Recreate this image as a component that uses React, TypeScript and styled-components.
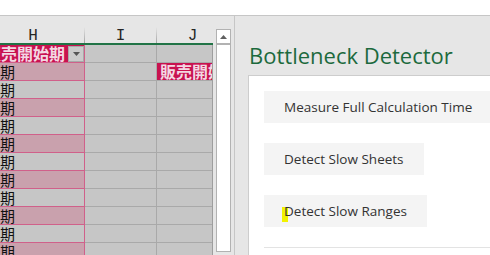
import React from 'react';
import styled, { createGlobalStyle } from 'styled-components';

const GlobalStyle = createGlobalStyle`
  html, body { margin: 0; padding: 0; background: #ffffff; }
  body { font-family: "Open Sans", "Noto Sans", sans-serif; }
  #root { width: 490px; height: 255px; overflow: hidden; }
`;

const Window = styled.div`
  width: 490px;
  height: 255px;
  display: flex;
  flex-direction: column;
  overflow: hidden;
  background: #e6e6e6;
`;

const FormulaBar = styled.div`
  flex: none;
  height: 15px;
  background: #ffffff;
  border-bottom: 1px solid #c6c6c6;
`;

const Workspace = styled.div`
  flex: 1;
  min-height: 0;
  display: flex;
`;

const Sheet = styled.div`
  flex: none;
  width: 234px;
  display: flex;
`;

const GridViewport = styled.div`
  flex: none;
  width: 213px;
  padding-top: 11px;
  box-sizing: border-box;
  display: flex;
  flex-direction: column;
  overflow: hidden;
`;

const ColumnHeaderRow = styled.div`
  flex: none;
  display: flex;
  height: 18px;
  margin-left: -18px;
  box-sizing: border-box;
  border-bottom: 2px solid #217346;
`;

const ColumnHeader = styled.div<{ $w: number }>`
  flex: none;
  width: ${(p) => p.$w}px;
  height: 16px;
  box-sizing: border-box;
  padding-top: 1px;
  text-align: center;
  font-family: "Liberation Mono", monospace;
  font-size: 16px;
  line-height: 16px;
  color: #262626;
  border-right: 1px solid transparent;
  border-image: linear-gradient(to bottom, #e6e6e6, #a4a4a4) 1;
  border-image-slice: 0 1 0 0;
`;

const BodyFrame = styled.div`
  flex: 1;
  min-height: 0;
  overflow: hidden;
  border-right: 1px solid #9e9e9e;
`;

const Rows = styled.div`
  margin-left: -18px;
  display: flex;
  flex-direction: column;
`;

const Row = styled.div`
  display: flex;
  height: 18px;
`;

type Tone = 'head' | 'pink' | 'gray';

const toneBg: Record<Tone, string> = {
  head: '#c8124f',
  pink: '#c9a1ad',
  gray: '#c6c6c6',
};

const Cell = styled.div<{ $w: number; $tone: Tone; $line: 'pink' | 'gray' }>`
  position: relative;
  flex: none;
  width: ${(p) => p.$w}px;
  height: 18px;
  box-sizing: border-box;
  padding-left: 3px;
  display: flex;
  align-items: flex-end;
  overflow: hidden;
  white-space: nowrap;
  background: ${(p) => toneBg[p.$tone]};
  border-right: 1px solid ${(p) => (p.$line === 'pink' ? '#d0608a' : '#a9a9a9')};
  border-bottom: 1px solid ${(p) => (p.$line === 'pink' ? '#d0608a' : '#a9a9a9')};
  font-family: "Noto Sans CJK JP", sans-serif;
  font-size: ${(p) => (p.$tone === 'head' ? 16 : 15)}px;
  font-weight: ${(p) => (p.$tone === 'head' ? 700 : 400)};
  line-height: 17px;
  color: ${(p) => (p.$tone === 'head' ? '#f3d8e2' : '#111111')};
`;

const FilterButton = styled.div`
  position: absolute;
  right: 0;
  top: 1px;
  width: 16px;
  height: 16px;
  box-sizing: border-box;
  background: #cbcbcb;
  border: 1px solid #a8a8a8;
  display: flex;
  align-items: center;
  justify-content: center;
`;

const Gutter = styled.div`
  flex: 1;
  display: flex;
  padding: 13px 3px 3px 3px;
`;

const ScrollBar = styled.div`
  width: 15px;
  flex: none;
  box-sizing: border-box;
  border: 1px solid #b2b2b2;
  background: #ffffff;
  display: flex;
  flex-direction: column;
`;

const ScrollArrow = styled.div`
  height: 13px;
  flex: none;
  border-bottom: 2px solid #b2b2b2;
  display: flex;
  align-items: center;
  justify-content: center;
`;

const Pane = styled.div`
  flex: 1;
  min-width: 0;
  display: flex;
  flex-direction: column;
  border-left: 1px solid #c6c6c6;
  padding-left: 13px;
  overflow: hidden;
`;

const Title = styled.h1`
  margin: 24px 0 5px 1px;
  font-family: "Open Sans", sans-serif;
  font-size: 22px;
  font-weight: 400;
  line-height: 30px;
  color: #1c6a3d;
  white-space: nowrap;
`;

const Content = styled.div`
  flex: 1;
  background: #ffffff;
  border-top: 1px solid #cdcdcd;
  border-left: 1px solid #cdcdcd;
  padding: 15px 0 0 15px;
  display: flex;
  flex-direction: column;
  align-items: flex-start;
  gap: 20px;
`;

const ActionButton = styled.button`
  position: relative;
  height: 32px;
  padding: 0 20px;
  border: none;
  background: #f4f4f4;
  font-family: "Open Sans", sans-serif;
  font-size: 13.5px;
  color: #333333;
  white-space: nowrap;
  display: flex;
  align-items: center;
`;

const Label = styled.span`
  position: relative;
  z-index: 1;
`;

const Highlight = styled.span`
  position: absolute;
  left: 18px;
  top: 12px;
  width: 6px;
  height: 15px;
  background: #f2f200;
`;

const Separator = styled.div`
  align-self: stretch;
  height: 1px;
  background: #e3e3e3;
`;

const COLS = [103, 72, 72];

export default function App() {
  const dataRows = Array.from({ length: 11 }, (_, i) => i);
  return (
    <>
      <GlobalStyle />
      <Window>
        <FormulaBar />
        <Workspace>
          <Sheet>
            <GridViewport>
              <ColumnHeaderRow>
                <ColumnHeader $w={COLS[0]}>H</ColumnHeader>
                <ColumnHeader $w={COLS[1]}>I</ColumnHeader>
                <ColumnHeader $w={COLS[2]}>J</ColumnHeader>
              </ColumnHeaderRow>
              <BodyFrame>
                <Rows>
                  <Row>
                    <Cell $w={COLS[0]} $tone="head" $line="pink">
                      販売開始期
                      <FilterButton>
                        <svg width="7" height="4" viewBox="0 0 7 4">
                          <path d="M0 0 H7 L3.5 4 Z" fill="#555" />
                        </svg>
                      </FilterButton>
                    </Cell>
                    <Cell $w={COLS[1]} $tone="gray" $line="gray" />
                    <Cell $w={COLS[2]} $tone="gray" $line="gray" />
                  </Row>
                  {dataRows.map((i) => (
                    <Row key={i}>
                      <Cell $w={COLS[0]} $tone={i % 2 === 0 ? 'pink' : 'gray'} $line="pink">
                        {i % 2 === 0 ? '上期' : '下期'}
                      </Cell>
                      <Cell $w={COLS[1]} $tone="gray" $line="gray" />
                      <Cell $w={COLS[2]} $tone={i === 0 ? 'head' : 'gray'} $line="gray">
                        {i === 0 ? '販売開始期' : ''}
                      </Cell>
                    </Row>
                  ))}
                </Rows>
              </BodyFrame>
            </GridViewport>
            <Gutter>
              <ScrollBar>
                <ScrollArrow>
                  <svg width="7" height="4" viewBox="0 0 7 4">
                    <path d="M0 4 H7 L3.5 0 Z" fill="#606060" />
                  </svg>
                </ScrollArrow>
              </ScrollBar>
            </Gutter>
          </Sheet>
          <Pane>
            <Title>Bottleneck Detector</Title>
            <Content>
              <ActionButton>
                <Label>Measure Full Calculation Time</Label>
              </ActionButton>
              <ActionButton>
                <Label>Detect Slow Sheets</Label>
              </ActionButton>
              <ActionButton>
                <Highlight />
                <Label>Detect Slow Ranges</Label>
              </ActionButton>
              <Separator />
            </Content>
          </Pane>
        </Workspace>
      </Window>
    </>
  );
}
